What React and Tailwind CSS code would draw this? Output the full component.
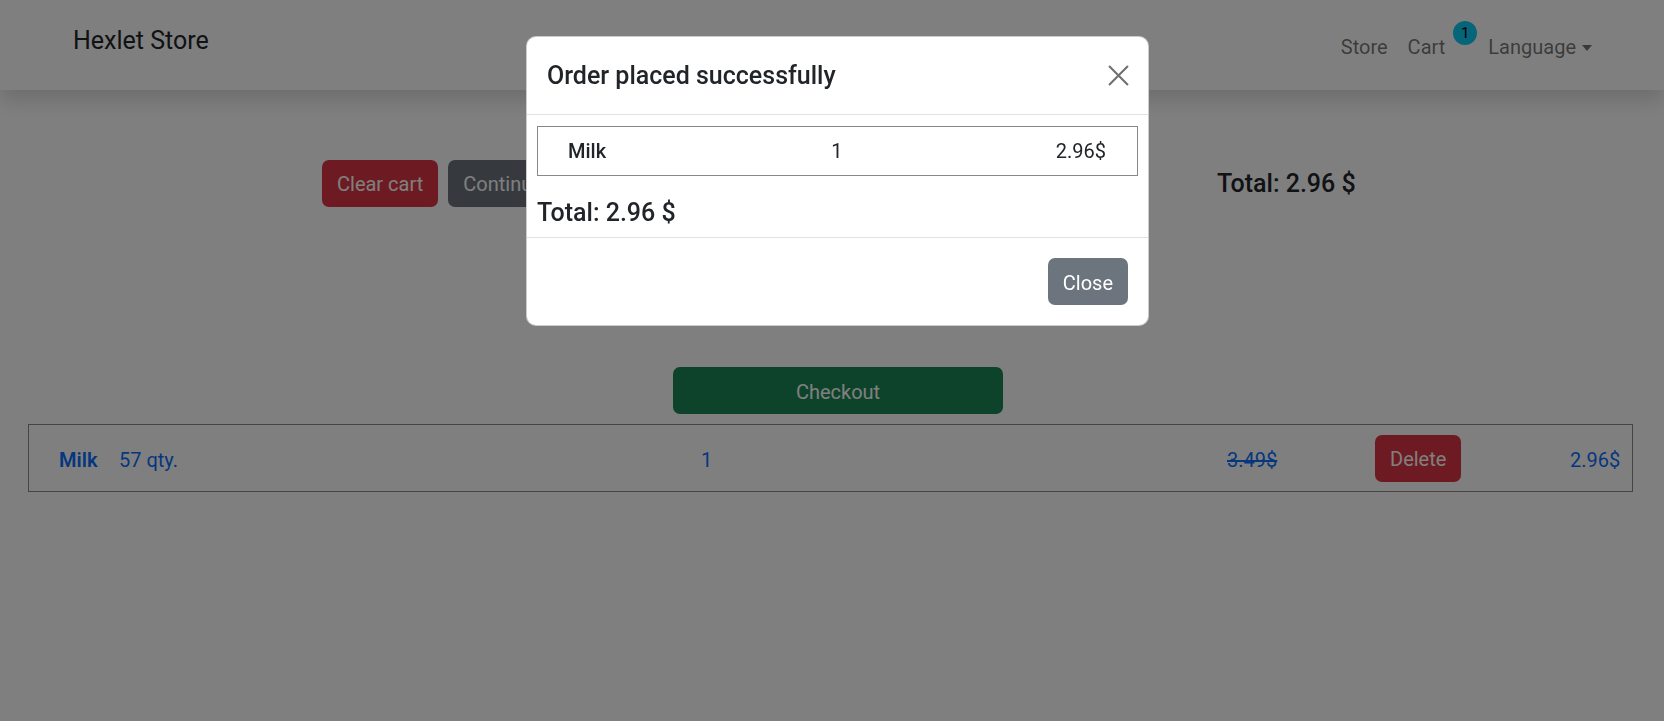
export default function App() {
  return (
    <div className="relative min-h-[721px] bg-white text-[#212529] font-['Roboto','Segoe_UI',sans-serif]">
      <nav className="h-[90px] flex justify-between items-start pl-[73px] pr-[62px] shadow-[0_10px_20px_rgba(0,0,0,0.15)]">
        <a className="pt-[24px] text-[25px] leading-[34px] text-[#212529]">Hexlet Store</a>
        <ul className="flex items-start pt-[32px] text-[20px] leading-[30px] text-black/55">
          <li className="px-[10px]">Store</li>
          <li className="pl-[10px] flex items-start">
            <span>Cart</span>
            <span className="ml-[8px] -mt-[11px] w-[24px] h-[24px] rounded-full bg-[#0dcaf0] text-black text-[15px] leading-[24px] text-center">
              1
            </span>
          </li>
          <li className="pl-[11px] pr-[10px] flex items-center">
            <span>Language</span>
            <span className="ml-[6px] mt-[2px] w-0 h-0 border-t-[6px] border-t-black/55 border-x-[5px] border-x-transparent"></span>
          </li>
        </ul>
      </nav>

      <main className="text-[20px]">
        <div className="mt-[70px] flex items-center h-[47px]">
          <div className="w-[1217px] pl-[322px] flex gap-[10px]">
            <button className="h-[47px] px-[15px] rounded-[7px] bg-[#dc3545] text-white">Clear cart</button>
            <button className="h-[47px] px-[15px] rounded-[7px] bg-[#6c757d] text-white">Continue shopping</button>
          </div>
          <h5 className="text-[25px] font-medium leading-[30px]">Total: 2.96 $</h5>
        </div>

        <div className="mt-[160px] pl-[673px]">
          <button className="w-[330px] h-[47px] pt-[2px] rounded-[7px] bg-[#198754] text-white">Checkout</button>
        </div>

        <div className="mt-[10px] mx-[28px] w-[1605px] h-[68px] border border-[#8a8a8a] flex items-center pl-[30px] text-[#0d6efd]">
          <span className="w-[60px] pt-[3px] font-semibold">Milk</span>
          <span className="w-[582px] pt-[3px]">57 qty.</span>
          <span className="w-[526px] pt-[3px]">1</span>
          <span className="w-[148px] pt-[3px] line-through">3.49$</span>
          <span className="w-[195px]">
            <button className="h-[47px] px-[15px] pt-[2px] rounded-[7px] bg-[#dc3545] text-white">Delete</button>
          </span>
          <span className="pt-[3px]">2.96$</span>
        </div>
      </main>

      <div className="fixed inset-0 bg-black/50"></div>

      <div className="fixed inset-0">
        <div className="ml-[526px] mt-[36px] w-[623px] bg-white rounded-[10px] border border-black/20 text-[#212529]">
          <div className="h-[78px] flex items-center justify-between px-[20px] border-b border-[#dee2e6]">
            <h5 className="text-[25px] font-medium leading-[30px]">Order placed successfully</h5>
            <button className="w-[22px] h-[22px] -mr-[1px] flex items-center justify-center">
              <svg width="21" height="21" viewBox="0 0 20 20" stroke="#707070" strokeWidth="2" fill="none">
                <path d="M1 1L19 19M19 1L1 19" />
              </svg>
            </button>
          </div>
          <div className="pt-[11px] px-[10px] pb-[9px]">
            <div className="h-[50px] border border-[#888] grid grid-cols-3 items-center pl-[30px] pr-[31px] text-[20px]">
              <span className="font-medium">Milk</span>
              <span className="text-center">1</span>
              <span className="text-right">2.96$</span>
            </div>
            <h5 className="mt-[22px] text-[25px] font-medium leading-[30px]">Total: 2.96 $</h5>
          </div>
          <div className="h-[88px] border-t border-[#dee2e6] flex items-center justify-end px-[20px]">
            <button className="h-[47px] px-[15px] pt-[2px] rounded-[7px] bg-[#6c757d] text-white text-[20px]">Close</button>
          </div>
        </div>
      </div>
    </div>
  );
}
